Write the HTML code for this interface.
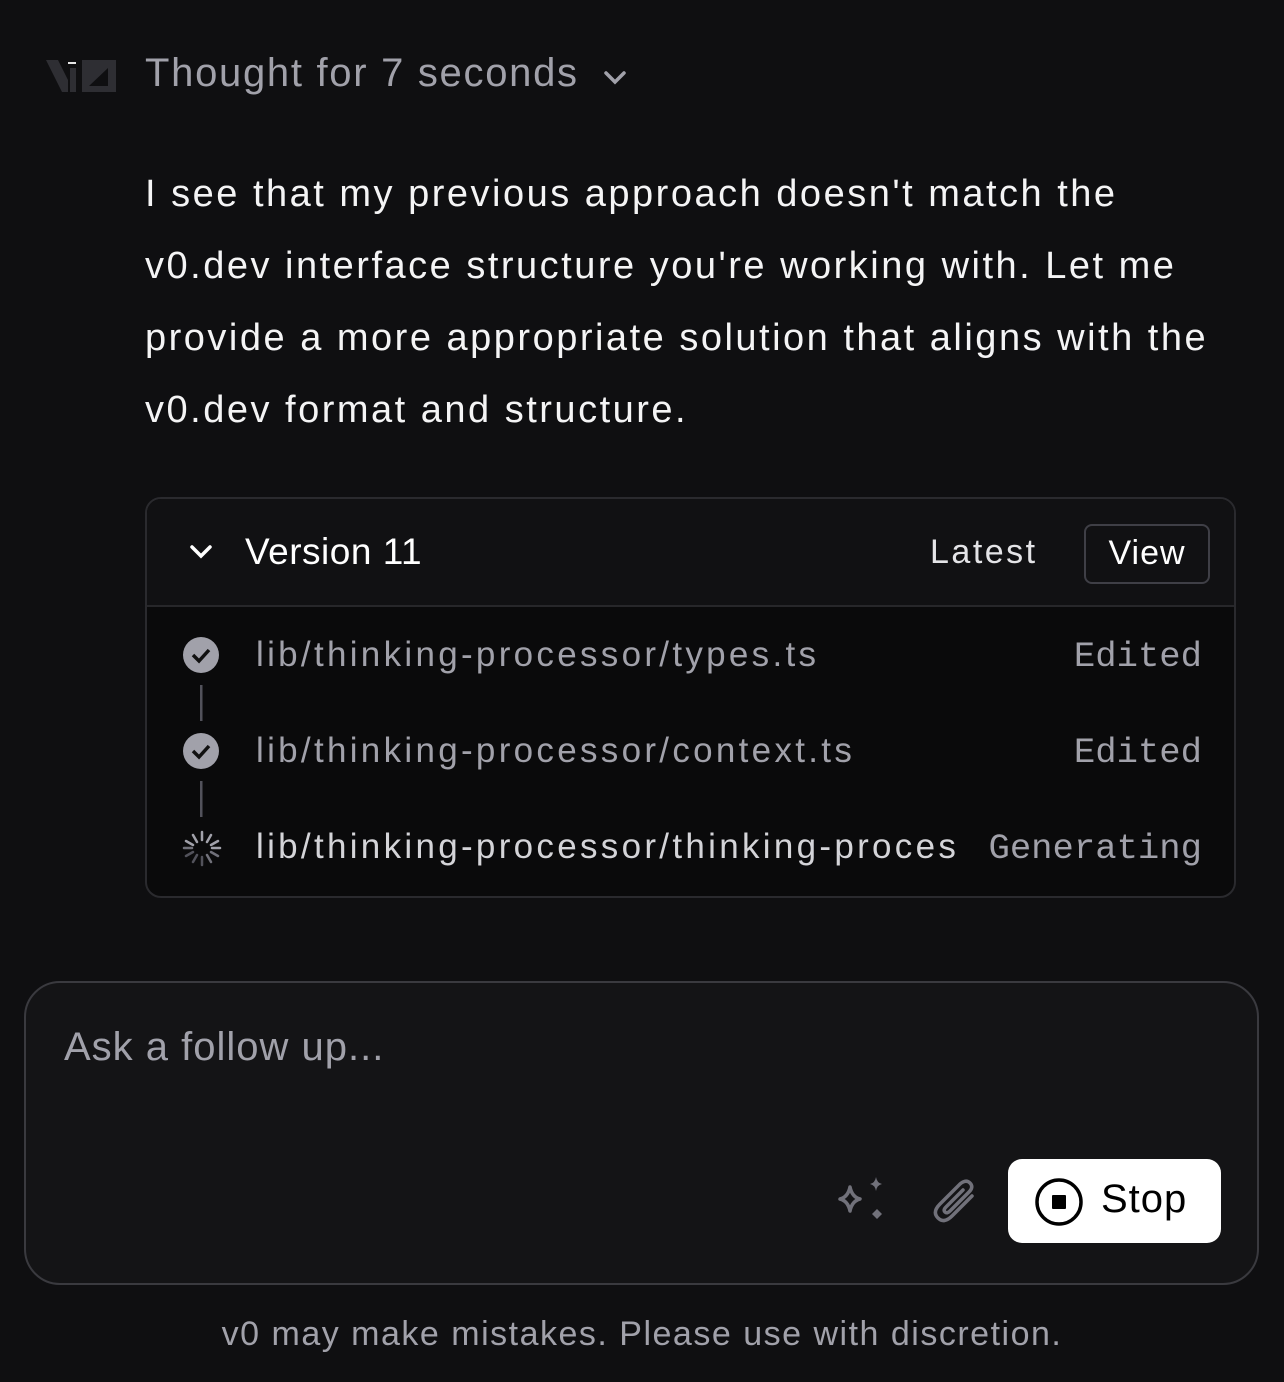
<!DOCTYPE html>
<html><head><meta charset="utf-8"><style>
*{margin:0;padding:0;box-sizing:border-box}
body{width:1284px;height:1382px;background:#0f0f11;font-family:"Liberation Sans",sans-serif;position:relative;overflow:hidden}
.a{position:absolute;white-space:nowrap}
</style></head><body>
<svg class="a" style="left:44px;top:56px" width="76" height="40" viewBox="0 0 76 40">
<path d="M2 4 H14 L24 24 V36 H18 Z" fill="#2e2e33"/>
<rect x="24" y="6" width="8" height="2" fill="#e6e6e6"/>
<path d="M26 12 H32 V36 H26 Z" fill="#2e2e33"/>
<path d="M38 4 H72 V36 H38 Z M45 30 H64 V12 Z" fill="#2e2e33" fill-rule="evenodd"/>
</svg>
<div class="a" style="left:145px;top:51px;font-size:40px;letter-spacing:1.7px;color:#a1a1aa">Thought for 7 seconds</div>
<svg class="a" style="left:602px;top:68px" width="26" height="20" viewBox="0 0 26 20"><path d="M4 5 L13 14 L22 5" stroke="#a1a1aa" stroke-width="3.5" fill="none" stroke-linecap="round"/></svg>
<div class="a" style="left:145px;top:158px;font-size:38px;letter-spacing:2.5px;line-height:72px;color:#f4f4f5">I see that my previous approach doesn't match the<br>v0.dev interface structure you're working with. Let me<br>provide a more appropriate solution that aligns with the<br>v0.dev format and structure.</div>
<div class="a" style="left:145px;top:497px;width:1091px;height:401px;border:2px solid #2a2a2e;border-radius:16px;background:#0a0a0b;overflow:hidden">
<div style="height:108px;background:#111113;border-bottom:2px solid #27272a;position:relative">
<svg class="a" style="left:40px;top:44px" width="30" height="20" viewBox="0 0 30 20"><path d="M5 4 L14 13 L23 4" stroke="#fff" stroke-width="3.5" fill="none" stroke-linecap="round"/></svg>
<div class="a" style="left:98px;top:32px;font-size:37px;letter-spacing:0.5px;color:#fff">Version 11</div>
<div class="a" style="left:783px;top:34px;font-size:34px;letter-spacing:2.5px;color:#e4e4e7">Latest</div>
<div class="a" style="left:937px;top:25px;width:126px;height:60px;border:2px solid #3f3f46;border-radius:8px;color:#fff;font-size:34px;letter-spacing:1px;text-align:center;line-height:54px">View</div>
</div>
</div>
<svg class="a" style="left:180px;top:636px" width="44" height="240" viewBox="0 0 44 240">
<circle cx="21" cy="19" r="18" fill="#a1a1aa"/><path d="M13 19 L19 25 L29 14" stroke="#111" stroke-width="3.5" fill="none"/>
<rect x="20" y="49" width="2.5" height="36" fill="#52525b"/>
<circle cx="21" cy="115" r="18" fill="#a1a1aa"/><path d="M13 115 L19 121 L29 110" stroke="#111" stroke-width="3.5" fill="none"/>
<rect x="20" y="145" width="2.5" height="36" fill="#52525b"/>
<g stroke-width="2.5" stroke-linecap="round">
<line x1="22" y1="196" x2="22" y2="204" stroke="#a1a1aa"/>
<line x1="31" y1="199" x2="27" y2="206" stroke="#a1a1aa"/>
<line x1="38" y1="205" x2="31" y2="209" stroke="#a1a1aa"/>
<line x1="40" y1="212" x2="32" y2="212" stroke="#a1a1aa"/>
<line x1="38" y1="220" x2="31" y2="216" stroke="#71717a"/>
<line x1="31" y1="226" x2="27" y2="219" stroke="#71717a"/>
<line x1="22" y1="229" x2="22" y2="221" stroke="#52525b"/>
<line x1="13" y1="226" x2="17" y2="219" stroke="#52525b"/>
<line x1="6" y1="220" x2="13" y2="216" stroke="#52525b"/>
<line x1="4" y1="212" x2="12" y2="212" stroke="#71717a"/>
<line x1="6" y1="205" x2="13" y2="209" stroke="#a1a1aa"/>
<line x1="13" y1="199" x2="17" y2="206" stroke="#a1a1aa"/>
</g></svg>
<div class="a" style="left:256px;top:635px;font-size:35px;letter-spacing:3.3px;color:#a1a1aa">lib/thinking-processor/types.ts</div>
<div class="a" style="left:256px;top:731px;font-size:35px;letter-spacing:3.3px;color:#a1a1aa">lib/thinking-processor/context.ts</div>
<div class="a" style="left:256px;top:827px;font-size:35px;letter-spacing:3.3px;width:705px;overflow:hidden;color:#d4d4d8">lib/thinking-processor/thinking-proces</div>
<div class="a" style="right:82px;top:636px;font-family:'Liberation Mono',monospace;font-size:35.6px;color:#a1a1aa">Edited</div>
<div class="a" style="right:82px;top:732px;font-family:'Liberation Mono',monospace;font-size:35.6px;color:#a1a1aa">Edited</div>
<div class="a" style="right:82px;top:828px;font-family:'Liberation Mono',monospace;font-size:35.6px;color:#a1a1aa">Generating</div>
<div class="a" style="left:24px;top:981px;width:1235px;height:304px;border:2px solid #3a3a3f;border-radius:36px;background:#141416"></div>
<div class="a" style="left:64px;top:1025px;font-size:40px;letter-spacing:1px;color:#a1a1aa">Ask a follow up...</div>
<svg class="a" style="left:836px;top:1175px" width="52" height="48" viewBox="0 0 52 48">
<path d="M14 12 Q16 22 24 24 Q16 26 14 36 Q12 26 4 24 Q12 22 14 12Z" fill="none" stroke="#71717a" stroke-width="3.5" stroke-linejoin="round"/>
<path d="M40 2 Q41 8 46 9 Q41 10 40 16 Q39 10 34 9 Q39 8 40 2Z" fill="#71717a"/>
<path d="M41 34 L46 39 L41 44 L36 39Z" fill="#71717a"/></svg>
<svg class="a" style="left:930px;top:1176px" width="50" height="52" viewBox="0 0 50 52">
<path d="M42 20 L22 40 Q14 48 8 42 Q2 36 10 28 L30 8 Q36 3 40 7 Q44 11 39 16 L20 35 Q17 38 15 36 Q13 34 16 31 L33 14" fill="none" stroke="#71717a" stroke-width="3.5" stroke-linecap="round"/></svg>
<div class="a" style="left:1008px;top:1159px;width:213px;height:84px;background:#fff;border-radius:14px"></div>
<svg class="a" style="left:1034px;top:1177px" width="50" height="50" viewBox="0 0 50 50"><circle cx="25" cy="25" r="22" stroke="#000" stroke-width="3.5" fill="none"/><rect x="18" y="18" width="14" height="14" fill="#000" rx="1"/></svg>
<div class="a" style="left:1101px;top:1177px;font-size:40px;letter-spacing:1px;color:#000">Stop</div>
<div class="a" style="left:0;width:1284px;text-align:center;top:1315px;font-size:34px;letter-spacing:1.5px;color:#a1a1aa">v0 may make mistakes. Please use with discretion.</div>
</body></html>
